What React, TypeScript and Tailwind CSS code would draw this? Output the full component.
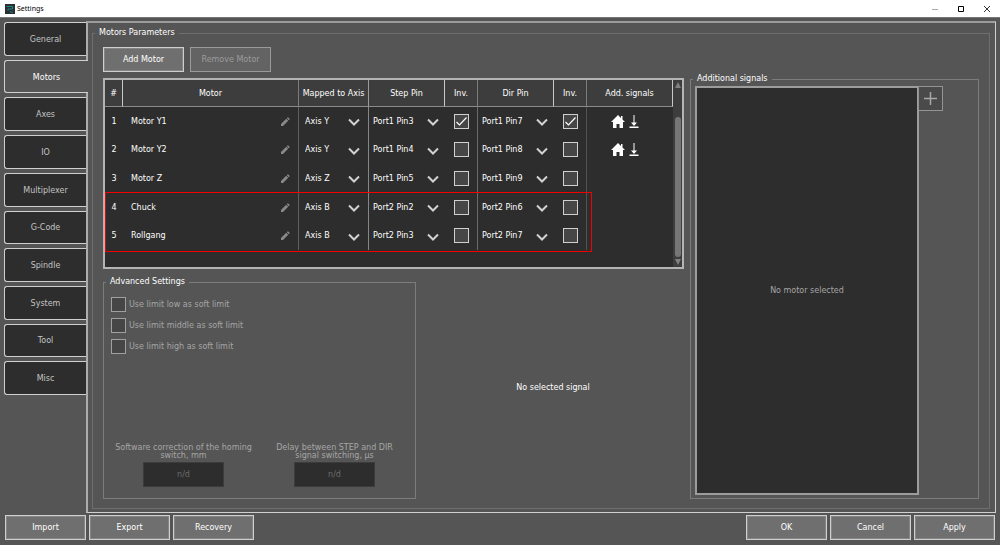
import React, { useState } from "react";

const tabs = ["General", "Motors", "Axes", "IO", "Multiplexer", "G-Code", "Spindle", "System", "Tool", "Misc"];

const initialMotors = [
  { id: 1, name: "Motor Y1", axis: "Axis Y", step: "Port1 Pin3", stepInv: true, dir: "Port1 Pin7", dirInv: true, signals: true },
  { id: 2, name: "Motor Y2", axis: "Axis Y", step: "Port1 Pin4", stepInv: false, dir: "Port1 Pin8", dirInv: false, signals: true },
  { id: 3, name: "Motor Z", axis: "Axis Z", step: "Port1 Pin5", stepInv: false, dir: "Port1 Pin9", dirInv: false, signals: false },
  { id: 4, name: "Chuck", axis: "Axis B", step: "Port2 Pin2", stepInv: false, dir: "Port2 Pin6", dirInv: false, signals: false },
  { id: 5, name: "Rollgang", axis: "Axis B", step: "Port2 Pin3", stepInv: false, dir: "Port2 Pin7", dirInv: false, signals: false },
];

const axes = ["Axis X", "Axis Y", "Axis Z", "Axis B"];
const pins = ["Port1", "Port2"].flatMap((port) => [1, 2, 3, 4, 5, 6, 7, 8, 9].map((n) => `${port} Pin${n}`));

const headers = [
  { title: "#", line: "border-r border-[#c8c8c8]" },
  { title: "Motor", line: "border-r border-[#7c7c7c]" },
  { title: "Mapped to Axis", line: "border-r border-[#9a9a9a]" },
  { title: "Step Pin", line: "border-r border-[#c8c8c8]" },
  { title: "Inv.", line: "border-r border-[#7c7c7c]" },
  { title: "Dir Pin", line: "border-r border-[#c8c8c8]" },
  { title: "Inv.", line: "border-r border-[#7c7c7c]" },
  { title: "Add. signals", line: "border-r border-[#c8c8c8]" },
];

const Check = ({ label, checked = false, disabled = false }: { label: string; checked?: boolean; disabled?: boolean }) => {
  const [on, setOn] = useState(checked);
  return (
    <span className="relative block h-[15px] w-[15px]">
      <input
        type="checkbox"
        aria-label={label}
        checked={on}
        disabled={disabled}
        onChange={() => setOn(!on)}
        className="block h-[15px] w-[15px] appearance-none border border-[#d0d0d0] bg-[#464646] disabled:border-[#a0a0a0]"
      />
      {on && (
        <svg viewBox="0 0 15 15" className="pointer-events-none absolute inset-0 h-full w-full" fill="none" stroke="#fff" strokeWidth="1.2">
          <path d="M2.5 8 5.5 11 12.5 3.5" />
        </svg>
      )}
    </span>
  );
};

const Dropdown = ({ label, value, options }: { label: string; value: string; options: string[] }) => (
  <div className="relative">
    <select aria-label={label} defaultValue={value} className="block h-6 w-full appearance-none bg-transparent pt-px pl-1 text-white">
      {options.map((option) => (
        <option key={option}>{option}</option>
      ))}
    </select>
    <svg viewBox="0 0 12 8" className="pointer-events-none absolute top-[9px] right-[6px] h-2 w-3" fill="none" stroke="#d2d2d2" strokeWidth="2">
      <path d="M1 1.5 6 6.5 11 1.5" />
    </svg>
  </div>
);

const PushButton = ({ children, disabled = false }: { children: React.ReactNode; disabled?: boolean }) => (
  <button
    disabled={disabled}
    className="h-[25px] w-[81px] border border-[#cfcfcf] bg-[#6f6f6f] text-white outline -outline-offset-2 outline-[#858585] disabled:border-[#9a9a9a] disabled:bg-[#636363] disabled:text-[#9c9c9c] disabled:outline-transparent"
  >
    {children}
  </button>
);

const SignalIcons = () => (
  <div className="flex items-center gap-1 pl-6">
    <svg viewBox="0 0 14 13" className="h-[13px] w-[14px]" fill="#fff">
      <path d="M7 0 0 7h2v6h3.500V9h3v4H12V7h2L11.500 4.500V1H10v2z" />
    </svg>
    <svg viewBox="0 0 10 13" className="h-[13px] w-[10px]" fill="#fff">
      <path d="M4.500 0h1v7.500H8L5 11 2 7.500h2.500zM.5 11.500h9V13h-9z" />
    </svg>
  </div>
);

const MotorTable = () => (
  <div className="relative flex h-[191px] border-2 border-[#b4b4b4] bg-[#2d2d2d]">
    <table className="h-[170px] flex-1 table-fixed border-separate border-spacing-0">
      <colgroup>
        <col className="w-[18px]" />
        <col />
        <col className="w-[70px]" />
        <col className="w-[76px]" />
        <col className="w-[33px]" />
        <col className="w-[76px]" />
        <col className="w-[33px]" />
        <col className="w-[86px]" />
      </colgroup>
      <thead>
        <tr className="h-[27px] bg-[#3d3d3d]">
          {headers.map((header, index) => (
            <th key={index} className={`border-b border-b-[#8a8a8a] p-0 pt-px font-normal ${header.line}`}>
              {header.title}
            </th>
          ))}
        </tr>
      </thead>
      <tbody>
        {initialMotors.map((motor) => (
          <tr key={motor.id}>
            <td className="p-0 pt-px text-center">{motor.id}</td>
            <td className="border-r border-[#5e5e5e] p-0 pt-px">
              <div className="flex items-center justify-between pr-2 pl-2">
                {motor.name}
                <button aria-label={`Rename ${motor.name}`}>
                  <svg viewBox="0 0 10 10" className="h-[10px] w-[10px]" fill="#8a8a8a">
                    <path d="M1 9V7l5.200-5.200 2 2L3 9zM6.800 1.200 7.500.5q.4-.4.8 0l1.200 1.200q.4.4 0 .8l-.7.7z" />
                  </svg>
                </button>
              </div>
            </td>
            <td className="border-r border-[#868686] p-0 px-[2px]">
              <Dropdown label={`${motor.name} axis`} value={motor.axis} options={axes} />
            </td>
            <td className="p-0">
              <Dropdown label={`${motor.name} step pin`} value={motor.step} options={pins} />
            </td>
            <td className="border-r border-[#6a6a6a] p-0 pl-[9px]">
              <Check label={`${motor.name} invert step`} checked={motor.stepInv} />
            </td>
            <td className="p-0">
              <Dropdown label={`${motor.name} dir pin`} value={motor.dir} options={pins} />
            </td>
            <td className="border-r border-[#525252] p-0 pl-[9px]">
              <Check label={`${motor.name} invert dir`} checked={motor.dirInv} />
            </td>
            <td className="p-0">{motor.signals && <SignalIcons />}</td>
          </tr>
        ))}
      </tbody>
    </table>
    <div className="flex w-[9px] flex-col items-center gap-[2px] bg-[#3d3d3d] py-[2px]">
      <svg viewBox="0 0 6 6" className="h-[6px] w-[6px]" fill="#808080">
        <path d="M3 0 6 6H0z" />
      </svg>
      <div className="mt-[27px] w-[6px] flex-1 rounded-full bg-[#767676]" />
      <svg viewBox="0 0 6 6" className="h-[6px] w-[6px]" fill="#808080">
        <path d="M3 6 0 0h6z" />
      </svg>
    </div>
    {/* highlight around the Port2 motors */}
    <div className="pointer-events-none absolute top-[112px] right-[90px] left-0 h-[60px] border border-[#f00000]" />
  </div>
);

const ValueField = ({ id, label }: { id: string; label: string }) => (
  <div className="flex w-[151px] flex-col items-center">
    <label htmlFor={id} className="w-[140px] text-center leading-[8px] text-[#a6a6a6]">
      {label}
    </label>
    <input id={id} disabled value="n/d" readOnly className="mt-[2px] h-[25px] w-[81px] border border-[#3c3c3c] bg-[#2d2d2d] text-center text-[#6c6c6c]" />
  </div>
);

const AdvancedSettings = () => (
  <fieldset className="flex w-[313px] flex-col border border-[#7c7c7c] pb-[11px]">
    <legend className="ml-[2px] px-1 leading-[12px]">Advanced Settings</legend>
    <div className="mt-[9px] flex flex-col gap-[6px] pl-[7px] text-[#a6a6a6]">
      {["low", "middle", "high"].map((name) => (
        <label key={name} className="flex h-[15px] items-center gap-[3px]">
          <Check label={`Use limit ${name} as soft limit`} disabled />
          Use limit {name} as soft limit
        </label>
      ))}
    </div>
    <div className="mt-auto flex pl-1">
      <ValueField id="homing" label="Software correction of the homing switch, mm" />
      <ValueField id="delay" label="Delay between STEP and DIR signal switching, µs" />
    </div>
  </fieldset>
);

const App = () => {
  const [active, setActive] = useState("Motors");

  return (
    <div className="flex min-h-screen flex-col bg-[#555555] font-['DejaVu_Sans',sans-serif] text-[8px] leading-[10px] text-white">
      <header className="flex h-[18px] items-center border-b border-[#777777] bg-white pl-[5px] font-['Noto_Sans',sans-serif] text-black">
        <svg viewBox="0 0 10 10" className="h-[10px] w-[10px]" fill="none">
          <path d="M0 0h10v10H0z" fill="#2b2f31" />
          <path d="M1.500 2.500h6V5H3v1.500M5 8h3" stroke="#148a8a" />
        </svg>
        <h1 className="ml-[2px] flex-1 text-[7px]">Settings</h1>
        <button aria-label="Minimize" className="flex h-full w-[26px] items-center justify-center">
          <svg viewBox="0 0 6 6" className="h-[6px] w-[6px]" stroke="#aaa">
            <path d="M0 3.500h6" />
          </svg>
        </button>
        <button aria-label="Maximize" className="flex h-full w-[26px] items-center justify-center">
          <svg viewBox="0 0 6 6" className="h-[6px] w-[6px]" fill="none" stroke="#000">
            <path d="M.5.5h5v5h-5z" />
          </svg>
        </button>
        <button aria-label="Close" className="flex h-full w-[26px] items-center justify-center">
          <svg viewBox="0 0 6 6" className="h-[6px] w-[6px]" stroke="#000" strokeWidth=".8">
            <path d="m0 0 6 6M6 0 0 6" />
          </svg>
        </button>
      </header>

      <main className="flex flex-1 px-1 pt-[3px]">
        <nav className="z-10 mt-px -mr-[2px] grid h-[373px] w-[84px] auto-rows-fr gap-1">
          {tabs.map((tab) => (
            <button
              key={tab}
              onClick={() => setActive(tab)}
              className={
                tab === active
                  ? "rounded-l-[3px] border border-r-0 border-[#d0d0d0] bg-[#555555] pt-[2px] text-white"
                  : "mr-[2px] rounded-l-[3px] border border-r-0 border-[#d0d0d0] bg-[#2d2d2d] pt-[2px] text-[#c4c4c4]"
              }
            >
              {tab}
            </button>
          ))}
        </nav>

        <section className="flex flex-1 border-t-2 border-r border-b border-l-2 border-t-[#9c9c9c] border-r-[#d0d0d0] border-b-[#d0d0d0] border-l-[#adadad] pt-1 pr-[5px] pb-[3px] pl-1">
          <fieldset className="flex flex-1 border border-[#6e6e6e] pr-[10px] pb-[9px] pl-[10px]">
            <legend className="-ml-[8px] px-1 leading-[12px]">Motors Parameters</legend>
            <div className="flex w-full gap-[6px]">
              <div className="flex flex-1 flex-col pt-2">
                <div className="flex gap-[6px]">
                  <PushButton>Add Motor</PushButton>
                  <PushButton disabled>Remove Motor</PushButton>
                </div>
                <div className="mt-[6px]">
                  <MotorTable />
                </div>
                <div className="mt-[7px] flex flex-1">
                  <AdvancedSettings />
                  <div className="flex flex-1 items-center justify-center pl-[6px]">No selected signal</div>
                </div>
              </div>
              <fieldset className="mt-[34px] flex w-[289px] border border-[#7c7c7c] pr-[35px] pb-[3px] pl-1">
                <legend className="-ml-[2px] px-1 leading-[12px]">Additional signals</legend>
                <div className="mt-px flex w-full">
                  <div className="flex flex-1 items-center justify-center border-2 border-[#9c9c9c] bg-[#2d2d2d] text-[#a6a6a6]">
                    No motor selected
                  </div>
                  <button aria-label="Add signal" className="-ml-px flex h-[25px] w-[25px] items-center justify-center border border-[#949494] bg-[#4a4a4a]">
                    <svg viewBox="0 0 13 13" className="h-[13px] w-[13px]" stroke="#a8a8a8" strokeWidth="1.500">
                      <path d="M6.500 0v13M0 6.500h13" />
                    </svg>
                  </button>
                </div>
              </fieldset>
            </div>
          </fieldset>
        </section>
      </main>

      <footer className="flex justify-between px-[5px] pt-[2px] pb-[5px]">
        <div className="flex gap-[3px]">
          <PushButton>Import</PushButton>
          <PushButton>Export</PushButton>
          <PushButton>Recovery</PushButton>
        </div>
        <div className="flex gap-[3px]">
          <PushButton>OK</PushButton>
          <PushButton>Cancel</PushButton>
          <PushButton>Apply</PushButton>
        </div>
      </footer>
    </div>
  );
};

export default App;
